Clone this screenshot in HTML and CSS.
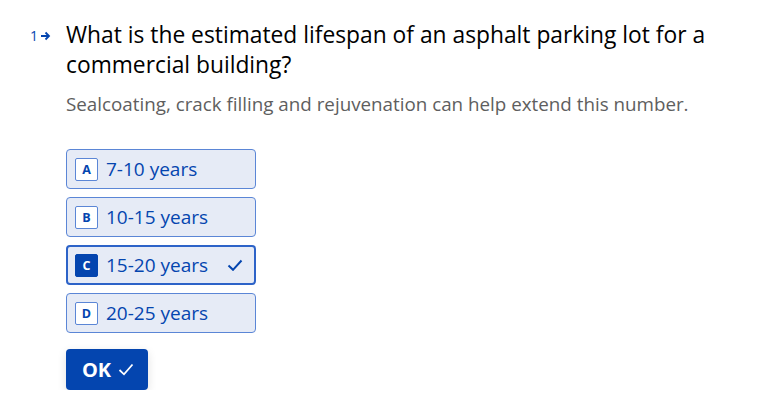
FILE: index.html
```html
<!DOCTYPE html>
<html>
<head>
<meta charset="utf-8">
<link rel="stylesheet" href="styles.css">
</head>
<body>
<div class="page">
  <div class="question">
    <div class="num">1<svg class="arrow" width="11" height="10" viewBox="0 0 11 10"><path d="M1 5h8M5.5 1.5L9 5l-3.5 3.5" fill="none" stroke="#0445af" stroke-width="1.8"/></svg></div>
    <div class="body">
      <h1 class="title">What is the estimated lifespan of an asphalt parking lot for a commercial building?</h1>
      <p class="desc">Sealcoating, crack filling and rejuvenation can help extend this number.</p>
      <div class="options">
        <div class="option"><span class="key">A</span><span class="label">7-10 years</span></div>
        <div class="option"><span class="key">B</span><span class="label">10-15 years</span></div>
        <div class="option selected"><span class="key">C</span><span class="label">15-20 years</span><svg class="check" width="16" height="12" viewBox="0 0 16 12"><path d="M1.5 6.5l4.5 4.3L14.5 1.5" fill="none" stroke="#0445af" stroke-width="2"/></svg></div>
        <div class="option"><span class="key">D</span><span class="label">20-25 years</span></div>
      </div>
      <button class="ok">OK<svg width="16" height="13" viewBox="0 0 16 13"><path d="M1.5 7l4.5 4.3L14.5 1.5" fill="none" stroke="#fff" stroke-width="1.8"/></svg></button>
    </div>
  </div>
</div>
</body>
</html>
```
FILE: styles.css
```css
* { box-sizing: border-box; }
body { margin: 0; background: #fff; font-family: "Open Sans", "Noto Sans", sans-serif; }
.page { padding: 20px 0 0 30px; }
.question { display: flex; }
.num { width: 36px; display: flex; align-items: center; gap: 2px; height: 28px; font-size: 14px; color: #0445af; align-self: flex-start; margin-top: 1px; }
.arrow { margin-top: 1px; }
.body { flex: 1; }
.title { margin: 0; font-weight: 400; font-size: 22.8px; line-height: 30px; color: #000; width: 660px; }
.desc { margin: 11px 0 0; font-size: 18.8px; line-height: 26px; color: #5e5e5e; white-space: nowrap; }
.options { margin-top: 32px; display: flex; flex-direction: column; gap: 8px; width: 190px; }
.option { height: 40px; display: flex; align-items: center; padding: 0 8px; background: #e6ebf6; border: 1px solid #5b86d6; border-radius: 4px; color: #0445af; font-size: 19px; }
.option.selected { border: 2px solid #2d63c8; padding: 0 7px; }
.key { width: 23px; height: 23px; display: flex; align-items: center; justify-content: center; border: 1px solid #5b86d6; border-radius: 2px; background: #fff; font-size: 12.5px; font-weight: 700; margin-right: 8px; }
.selected .key { background: #0445af; border-color: #0445af; color: #fff; }
.label { flex: 1; }
.check { margin-right: 4px; }
.ok { margin-top: 16px; height: 41px; width: 82px; border: 0; border-radius: 4px; background: #0445af; color: #fff; font-family: "Open Sans", sans-serif; font-weight: 700; font-size: 20px; display: flex; align-items: center; justify-content: center; gap: 7px; padding: 0 0 0 2px; box-shadow: 0 3px 10px rgba(0,0,0,0.12); }
```
